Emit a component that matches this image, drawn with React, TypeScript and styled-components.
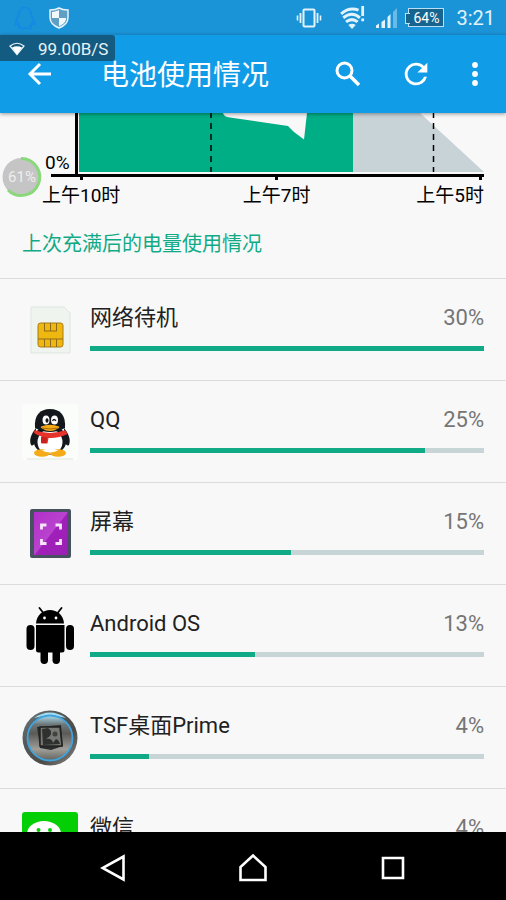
import React from "react";
import styled, { createGlobalStyle } from "styled-components";

const GlobalStyle = createGlobalStyle`
  * { box-sizing: border-box; }
  body { margin: 0; background: #f8f8f8; }
  button { border: 0; padding: 0; background: none; color: inherit; font: inherit; cursor: pointer; }
  svg { display: block; flex: none; }
`;

const Screen = styled.div`
  position: relative;
  display: flex;
  flex-direction: column;
  height: 100vh;
  overflow: hidden;
  background: #f8f8f8;
  color: #212121;
  font-family: Roboto, "Noto Sans CJK SC", sans-serif;
`;

const StatusBar = styled.div`
  display: flex;
  flex: none;
  align-items: center;
  justify-content: space-between;
  height: 35px;
  padding: 0 11px 0 14px;
  background: #1b93d7;
  color: #e2f3fc;
`;

const StatusGroup = styled.div<{ $gap: number }>`
  display: flex;
  align-items: center;
  gap: ${(p) => p.$gap}px;
`;

const Battery = styled.span`
  display: flex;
  align-items: center;
  justify-content: center;
  position: relative;
  width: 36px;
  height: 19px;
  border: 1px solid #b9e0f6;
  background: #17658f;
  font-size: 14px;
  line-height: 16px;
  color: #fff;
  &::before {
    content: "";
    position: absolute;
    left: -4px;
    top: 4px;
    width: 4px;
    height: 9px;
    border: 1px solid #b9e0f6;
    border-right: 0;
    background: #17658f;
  }
`;

const Clock = styled.time`
  margin-left: 1px;
  font-size: 20px;
  line-height: 24px;
`;

const AppBar = styled.header`
  position: relative;
  z-index: 1;
  display: flex;
  flex: none;
  align-items: center;
  height: 78px;
  padding: 0 14px 0 22px;
  background: #119ce8;
  box-shadow: 0 1px 4px rgba(0, 0, 0, 0.4);
  color: #fff;
`;

const BarButton = styled.button`
  display: flex;
  align-items: center;
  justify-content: center;
  width: 34px;
  height: 40px;
`;

const Title = styled.h1`
  flex: 1;
  margin: 0 0 0 45px;
  padding-top: 4px;
  font-size: 28px;
  line-height: 40px;
  font-weight: 400;
`;

const Actions = styled.div`
  display: flex;
  gap: 34px;
  & > :last-child { margin-left: -9px; }
`;

const SpeedBadge = styled.div`
  position: absolute;
  z-index: 2;
  top: 35px;
  left: 0;
  display: flex;
  align-items: center;
  gap: 13px;
  height: 26px;
  padding: 2px 7px 0 9px;
  border-radius: 0 3px 3px 0;
  background: rgba(20, 70, 95, 0.75);
  color: #e8f3f8;
  font-size: 17px;
  line-height: 24px;
`;

const Bubble = styled.div`
  position: absolute;
  z-index: 2;
  top: 156px;
  left: 1px;
  display: grid;
  place-items: center;
  color: #eeeeee;
  font-size: 15px;
  line-height: 20px;
  & > * { grid-area: 1 / 1; }
`;

const Content = styled.main`
  flex: 1;
  min-height: 0;
  overflow: hidden;
`;

const ChartArea = styled.section`
  position: relative;
`;

const ChartDrawing = styled.svg`
  width: 100%;
  height: 68px;
`;

const ZeroLabel = styled.span`
  position: absolute;
  top: 38px;
  left: 45px;
  font-size: 19px;
  line-height: 24px;
  color: #000;
`;

const AxisLabels = styled.div`
  display: grid;
  grid-template-columns: 200fr 173fr auto;
  padding: 1px 22px 0 42px;
  font-size: 19px;
  line-height: 28px;
  color: #000;
`;

const SectionTitle = styled.h2`
  margin: 0;
  padding: 20px 22px 19px;
  font-size: 20px;
  line-height: 29px;
  font-weight: 400;
  color: #10ab86;
`;

const List = styled.ul`
  margin: 0;
  padding: 0;
  list-style: none;
`;

const Row = styled.li`
  display: flex;
  gap: 12px;
  height: 102px;
  padding: 0 22px;
  border-top: 1px solid #dcdcdc;
`;

const IconBox = styled.div`
  display: flex;
  align-items: center;
  flex: none;
`;

const RowBody = styled.div`
  flex: 1;
  padding-top: 23px;
`;

const RowHead = styled.div`
  display: flex;
  justify-content: space-between;
  margin-bottom: 12px;
  font-size: 22px;
  line-height: 32px;
`;

const Percent = styled.span`
  color: #757575;
`;

const Track = styled.div`
  height: 5px;
  background: #c8d5d7;
`;

const Fill = styled.div`
  height: 100%;
  background: #10ab86;
`;

const NavBar = styled.nav`
  display: flex;
  flex: none;
  align-items: center;
  justify-content: center;
  gap: 92px;
  height: 68px;
  padding-top: 4px;
  background: #000;
  color: #fff;
`;

const NavButton = styled.button`
  display: flex;
  align-items: center;
  justify-content: center;
  width: 48px;
  height: 48px;
`;

const PenguinOutline = () => (
  <svg width="22" height="24" viewBox="0 0 22 24" fill="none" stroke="#128ae6" strokeWidth="1.6">
    <path d="M11 1.500c-4 0-6 3-6 6.500c0 2-3.500 6-3.500 9.500c0 1.500 1 1.500 2.500-.500c.3 1.500 1 2.700 2 3.500c-1.500.8-1.500 2 .5 2h3l1.500-.800l1.500.800h3c2 0 2-1.200.5-2c1-.800 1.700-2 2-3.500c1.500 2 2.500 2 2.500.5c0-3.500-3.500-7.500-3.500-9.500c0-3.500-2-6.500-6-6.500z" />
  </svg>
);

const Shield = () => (
  <svg width="20" height="22" viewBox="0 0 20 22">
    <path d="M10 1C7.500 2.500 4.500 3 1 3v7.500c0 5 4 8.500 9 10.500c5-2 9-5.500 9-10.500V3c-3.500 0-6.500-.5-9-2z" fill="#5f9fc4" stroke="#e6f4fb" strokeWidth="1.500" />
    <path d="M10 3v8H3V5c2.500-.200 5-.8 7-2zM10 11h7c0 4-3 6.500-7 8.300z" fill="#f2f9fd" />
  </svg>
);

const Vibrate = () => (
  <svg width="26" height="20" viewBox="0 0 26 20" fill="none" stroke="currentColor">
    <rect x="7.500" y="1.500" width="11" height="17" rx="1" strokeWidth="2" />
    <path d="M4.500 5v10M21.500 5v10" strokeWidth="1.800" />
    <path d="M1.500 7.500v5M24.500 7.500v5" strokeWidth="1.600" />
  </svg>
);

const WifiAlert = () => (
  <svg width="25" height="25" viewBox="0 0 27 25">
    <g fill="none" stroke="currentColor" strokeWidth="3.200">
      <path d="M1.200 8.500Q10 .8 20 4.500" />
      <path d="M3.500 12.800q9.500-7.500 18 0" />
      <path d="M6.500 17.300q6.500-5 12.500 0" />
    </g>
    <path d="M9 20.500q4-2.500 8 0L13 25z" fill="currentColor" />
    <path d="M23 0h3v11h-3zM23 13.500h3v3h-3z" fill="currentColor" />
  </svg>
);

const Signal = () => (
  <svg width="21" height="20" viewBox="0 0 21 20" fill="currentColor">
    <path d="M0 20v-2.500l3-2V20zM5.500 20v-6l3.500-2.500V20zM11.500 20V9l3-3v14z" />
    <path d="M17 20V4l4-4v20z" opacity=".4" />
  </svg>
);

const StatusIcons = styled(StatusGroup)`
  & > :first-child { margin-right: 7px; }
`;

const SpeedWifi = () => (
  <svg width="16" height="14" viewBox="0 0 16 14">
    <path d="M1 4q7-5.500 14 0L8 12.500z" fill="none" stroke="currentColor" strokeWidth="1.200" />
    <path d="M3 5.500q5-2.500 10 0l-5 7z" fill="#fff" />
  </svg>
);

const BackArrow = () => (
  <svg width="24" height="24" viewBox="0 0 24 24" fill="none" stroke="currentColor" strokeWidth="3">
    <path d="M24 12H3M13 2L3 12l10 10" />
  </svg>
);

const SearchIcon = () => (
  <svg width="26" height="26" viewBox="0 0 26 26" fill="none" stroke="currentColor">
    <circle cx="9.500" cy="9.500" r="7.500" strokeWidth="3" />
    <path d="M15 15l9 9" strokeWidth="3.500" />
  </svg>
);

const RefreshIcon = () => (
  <svg width="34" height="34" viewBox="0 0 24 24" fill="currentColor">
    <path d="M17.650 6.350A7.960 7.960 0 0 0 12 4a8 8 0 1 0 7.730 10h-2.080A6 6 0 1 1 12 6c1.660 0 3.140.69 4.220 1.780L13 11h7V4z" />
  </svg>
);

const MoreIcon = () => (
  <svg width="8" height="24" viewBox="0 0 8 24" fill="currentColor">
    <circle cx="4" cy="3" r="2.900" />
    <circle cx="4" cy="12" r="2.900" />
    <circle cx="4" cy="21" r="2.900" />
  </svg>
);

const SimIcon = () => (
  <svg width="56" height="56" viewBox="0 0 56 56">
    <path d="M9 5h33l6 6v40H9z" fill="#eff4ee" stroke="#dfe7df" />
    <rect x="16" y="21" width="25" height="24" rx="2.500" fill="#efb810" stroke="#a87b12" />
    <path d="M22.500 21v8M28.500 21v8M34.500 21v8M22.500 37v8M28.500 37v8M34.500 37v8M22 29h13M16 37h25" fill="none" stroke="#8f6a1a" />
  </svg>
);

const QQIcon = () => (
  <svg width="56" height="56" viewBox="0 0 56 56">
    <rect width="56" height="56" rx="3" fill="#fbfdfa" />
    <path d="M5 55h46" stroke="#e9ebe6" strokeWidth="1.500" />
    <path d="M14 24C9 30 7 36 9 41c1 1.500 4-1 5-3M42 24c5 6 7 12 5 17c-1 1.500-4-1-5-3" fill="#14171b" />
    <ellipse cx="28" cy="36" rx="16.500" ry="15" fill="#14171b" />
    <ellipse cx="28" cy="38" rx="12.500" ry="12.500" fill="#fff" />
    <ellipse cx="20" cy="49" rx="8" ry="3.800" fill="#f5ab18" />
    <ellipse cx="36" cy="49" rx="8" ry="3.800" fill="#f5ab18" />
    <path d="M20 46.500q8 4 16 0q-8-4-16 0" fill="#fff" />
    <path d="M13 24C12 11 18 5 28 5s16 6 15 19q-15 8-30 0z" fill="#14171b" />
    <path d="M12.500 26q15.500 6 31 0l2 4q-9 4.500-19 4l-1 5.500h-6l.5-7q-5-1-8-3.500z" fill="#e5322a" />
    <path d="M19 32.500v6.500h5.500l.5-5.500" fill="#c9211e" />
    <path d="M19 22.500q9-3.500 18 0q1 1-1 2q-8 5-16 0q-2-1-1-2" fill="#f5ab18" />
    <path d="M20 24q8 2 16 0" stroke="#a66c0a" fill="none" />
    <ellipse cx="24" cy="16" rx="3.500" ry="4.500" fill="#fff" />
    <ellipse cx="32.500" cy="16" rx="3.500" ry="4.500" fill="#fff" />
    <ellipse cx="25" cy="16.500" rx="1.500" ry="2.300" fill="#14171b" />
    <path d="M30.500 17q1.500-3 3.500 0" stroke="#14171b" fill="none" strokeWidth="1.300" />
  </svg>
);

const DisplayIcon = () => (
  <svg width="56" height="56" viewBox="0 0 56 56">
    <defs>
      <linearGradient id="display" x1="0" y1="0" x2="1" y2="1">
        <stop offset="0" stopColor="#b32fcb" />
        <stop offset=".5" stopColor="#b843cd" />
        <stop offset=".52" stopColor="#a01fba" />
        <stop offset="1" stopColor="#9a22b3" />
      </linearGradient>
    </defs>
    <rect x="8" y="3" width="41" height="49" rx="2" fill="#475160" />
    <rect x="12" y="6" width="33.500" height="43" fill="url(#display)" />
    <path d="M21 23.500v-4.500h5M35 19h5v4.500M40 33v4.500h-5M26 37.500h-5v-4.500" transform="translate(-1.500 0)" fill="none" stroke="#f5e4f8" strokeWidth="2.800" />
  </svg>
);

const AndroidIcon = () => (
  <svg width="56" height="58" viewBox="0 1 56 58">
    <path d="M14 17.500C14.500 9 21 4 28 4s13.500 5 14 13.500z" />
    <path d="M21 6.500L17.500 2M36 6.500L39.500 2" stroke="#000" strokeWidth="1.800" strokeLinecap="round" />
    <circle cx="22.500" cy="12" r="1.400" fill="#fff" />
    <circle cx="34" cy="12" r="1.400" fill="#fff" />
    <path d="M14 19H42.500V44q0 2.500-2.500 2.500H16.500q-2.500 0-2.500-2.500z" />
    <rect x="4.500" y="19" width="8" height="25" rx="4" />
    <rect x="44" y="19" width="8" height="25" rx="4" />
    <rect x="18.500" y="40" width="7.500" height="18" rx="3.700" />
    <rect x="30.500" y="40" width="7.500" height="18" rx="3.700" />
  </svg>
);

const TsfIcon = () => (
  <svg width="56" height="56" viewBox="0 0 56 56">
    <defs>
      <linearGradient id="rim" x1="0" y1="0" x2="1" y2="1">
        <stop offset="0" stopColor="#6f7b80" />
        <stop offset=".3" stopColor="#565b5b" />
        <stop offset=".65" stopColor="#4c4b48" />
        <stop offset="1" stopColor="#8b8b87" />
      </linearGradient>
      <linearGradient id="disc" x1="0" y1="0" x2="0" y2="1">
        <stop offset="0" stopColor="#a9dcef" />
        <stop offset=".2" stopColor="#6d7779" />
        <stop offset=".4" stopColor="#5b5a57" />
        <stop offset=".75" stopColor="#a09f9a" />
        <stop offset="1" stopColor="#62645f" />
      </linearGradient>
    </defs>
    <circle cx="28" cy="28" r="27.500" fill="url(#rim)" />
    <path d="M12 8Q28-3 44 8Q28 3 12 8z" fill="#a5dcf0" />
    <circle cx="28" cy="28" r="22.500" fill="url(#disc)" stroke="#3ea4df" strokeWidth="1.800" />
    <path d="M15 17l24-2l2 21l-12 4l-11-2z" fill="#2b2d2c" />
    <path d="M18 17h20l2 19H18z" fill="#777974" stroke="#222322" strokeWidth="1.500" />
    <path d="M20 19l6-1q5 3 2 8l-4 3q6-1 7 4l3-4q3 1 4 5l-17 1z" fill="#2f312f" />
    <circle cx="33" cy="24" r="2.500" fill="#41433f" />
  </svg>
);

const WeChatIcon = () => (
  <svg width="56" height="56" viewBox="0 0 56 56">
    <rect width="56" height="56" rx="3" fill="#04cf05" />
    <ellipse cx="22" cy="22" rx="17" ry="13" fill="#fff" />
    <circle cx="16.500" cy="18" r="2" fill="#04cf05" />
    <circle cx="28" cy="18" r="2" fill="#04cf05" />
    <ellipse cx="36" cy="35" rx="14" ry="11" fill="#fff" stroke="#04cf05" />
  </svg>
);

const BatteryChart = () => (
  <ChartDrawing viewBox="0 0 506 68" preserveAspectRatio="none" role="img" aria-label="电池电量">
    <path d="M79 0H353V59H79z" fill="#00ae86" />
    <path d="M353 0H420L484 59H353z" fill="#c8d3d8" />
    <path d="M223 0q1 4 7 4.500L288 13l6 6l10 7.500L307 0z" fill="#f8f8f8" />
    <path d="M211 0V59M433.500 0V59" stroke="#000" strokeWidth="1.500" strokeDasharray="6 5" strokeDashoffset="1" />
    <path d="M75 0h3v61h406v3h-2v3h-3v-3H278v3h-3v-3H83v3h-3v-3H51v-3h24z" fill="#000" />
  </ChartDrawing>
);

const apps = [
  { name: "网络待机", percent: 30, fill: 100, Icon: SimIcon },
  { name: "QQ", percent: 25, fill: 85, Icon: QQIcon },
  { name: "屏幕", percent: 15, fill: 51, Icon: DisplayIcon },
  { name: "Android OS", percent: 13, fill: 42, Icon: AndroidIcon },
  { name: "TSF桌面Prime", percent: 4, fill: 15, Icon: TsfIcon },
  { name: "微信", percent: 4, fill: 15, Icon: WeChatIcon },
];

export default function App() {
  return (
    <Screen>
      <GlobalStyle />
      <StatusBar>
        <StatusGroup $gap={13}>
          <PenguinOutline />
          <Shield />
        </StatusGroup>
        <StatusIcons $gap={11}>
          <Vibrate />
          <WifiAlert />
          <Signal />
          <Battery>64%</Battery>
          <Clock>3:21</Clock>
        </StatusIcons>
      </StatusBar>
      <AppBar>
        <BarButton aria-label="返回"><BackArrow /></BarButton>
        <Title>电池使用情况</Title>
        <Actions>
          <BarButton aria-label="搜索"><SearchIcon /></BarButton>
          <BarButton aria-label="刷新"><RefreshIcon /></BarButton>
          <BarButton aria-label="更多选项"><MoreIcon /></BarButton>
        </Actions>
      </AppBar>
      <SpeedBadge>
        <SpeedWifi />
        <span>99.00B/S</span>
      </SpeedBadge>
      <Bubble>
        <svg width="42" height="42" viewBox="0 0 42 42">
          <circle cx="20.500" cy="21" r="19" fill="#c5c5c5" />
          <path d="M20 2.500a18.500 18.500 0 1 1-13 31.500" fill="none" stroke="#8bd77c" strokeWidth="3" />
        </svg>
        <span>61%</span>
      </Bubble>
      <Content>
        <ChartArea>
          <BatteryChart />
          <ZeroLabel>0%</ZeroLabel>
          <AxisLabels>
            <span>上午10时</span>
            <span>上午7时</span>
            <span>上午5时</span>
          </AxisLabels>
        </ChartArea>
        <SectionTitle>上次充满后的电量使用情况</SectionTitle>
        <List>
          {apps.map(({ name, percent, fill, Icon }) => (
            <Row key={name}>
              <IconBox><Icon /></IconBox>
              <RowBody>
                <RowHead>
                  <span>{name}</span>
                  <Percent>{percent}%</Percent>
                </RowHead>
                <Track>
                  <Fill style={{ width: `${fill}%` }} />
                </Track>
              </RowBody>
            </Row>
          ))}
        </List>
      </Content>
      <NavBar>
        <NavButton aria-label="返回">
          <svg width="26" height="28" viewBox="0 0 26 28" fill="none" stroke="currentColor" strokeWidth="2.600">
            <path d="M23.500 2.500v23L2.500 14z" />
          </svg>
        </NavButton>
        <NavButton aria-label="主屏幕">
          <svg width="30" height="30" viewBox="0 0 30 30" fill="none" stroke="currentColor" strokeWidth="2.600">
            <path d="M15 2.500L27.500 14v13h-25V14z" />
          </svg>
        </NavButton>
        <NavButton aria-label="最近应用">
          <svg width="24" height="24" viewBox="0 0 24 24" fill="none" stroke="currentColor" strokeWidth="2.600">
            <path d="M2 2h20v20H2z" />
          </svg>
        </NavButton>
      </NavBar>
    </Screen>
  );
}
